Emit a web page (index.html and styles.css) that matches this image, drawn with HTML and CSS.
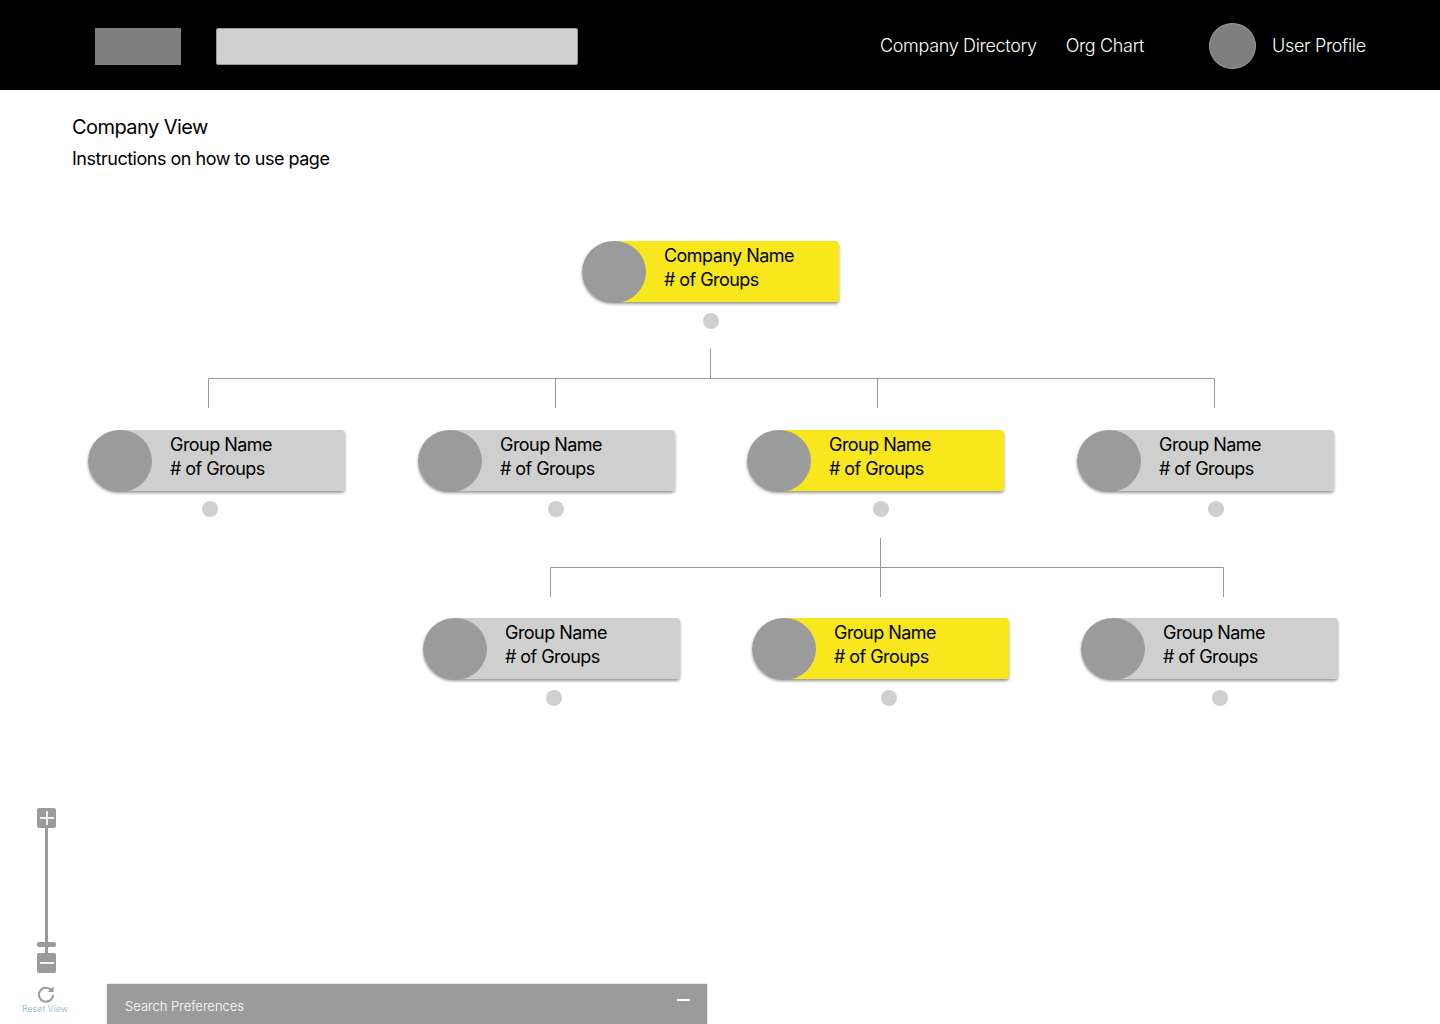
FILE: index.html
```html
<!DOCTYPE html>
<html lang="en">
<head>
<meta charset="UTF-8" />
<title>Company View</title>
<link rel="stylesheet" href="styles.css">
</head>
<body>

<header class="topbar">
  <div class="logo"></div>
  <div class="search"></div>
  <nav class="nav">
    <a class="nav-link">Company Directory</a>
    <a class="nav-link">Org Chart</a>
  </nav>
  <div class="profile">
    <div class="avatar"></div>
    <span class="nav-link">User Profile</span>
  </div>
</header>

<section class="intro">
  <h1 class="intro-title">Company View</h1>
  <p class="intro-text">Instructions on how to use page</p>
</section>

<!-- Org chart canvas -->
<main class="chart">
  <svg class="links" width="1440" height="520" viewBox="0 0 1440 520">
    <path d="M710.5 149V178.5M208.5 208V178.5H1214.5V208M555.5 178.5V208M877.5 178.5V208" />
    <path d="M880.5 338V397M550.5 397V367.5H1223.5V397" />
  </svg>

  <div class="node active n-company">
    <div class="node-pic"></div>
    <div class="node-text">Company Name<br># of Groups</div>
  </div>
  <span class="dot d-company"></span>

  <div class="node n-a">
    <div class="node-pic"></div>
    <div class="node-text">Group Name<br># of Groups</div>
  </div>
  <span class="dot d-a"></span>

  <div class="node n-b">
    <div class="node-pic"></div>
    <div class="node-text">Group Name<br># of Groups</div>
  </div>
  <span class="dot d-b"></span>

  <div class="node active n-c">
    <div class="node-pic"></div>
    <div class="node-text">Group Name<br># of Groups</div>
  </div>
  <span class="dot d-c"></span>

  <div class="node n-d">
    <div class="node-pic"></div>
    <div class="node-text">Group Name<br># of Groups</div>
  </div>
  <span class="dot d-d"></span>

  <div class="node n-e">
    <div class="node-pic"></div>
    <div class="node-text">Group Name<br># of Groups</div>
  </div>
  <span class="dot d-e"></span>

  <div class="node active n-f">
    <div class="node-pic"></div>
    <div class="node-text">Group Name<br># of Groups</div>
  </div>
  <span class="dot d-f"></span>

  <div class="node n-g">
    <div class="node-pic"></div>
    <div class="node-text">Group Name<br># of Groups</div>
  </div>
  <span class="dot d-g"></span>
</main>

<!-- Zoom control -->
<aside class="zoom">
  <button class="zoom-btn">
    <svg width="14" height="14" viewBox="0 0 14 14"><path d="M7 0V14M0 7H14" /></svg>
  </button>
  <div class="zoom-track"></div>
  <div class="zoom-handle"></div>
  <div class="zoom-track short"></div>
  <button class="zoom-btn">
    <svg width="14" height="14" viewBox="0 0 14 14"><path d="M0 7H14" /></svg>
  </button>
  <svg class="reset-icon" width="18" height="18" viewBox="0 0 18 18">
    <path d="M14.2 5A7 7 0 1 0 16 10" />
    <path class="reset-head" d="M16.6 1.2V7H10.8Z" />
  </svg>
  <span class="reset-label">Reset View</span>
</aside>

<div class="prefs">
  <span class="prefs-title">Search Preferences</span>
  <span class="prefs-toggle"></span>
</div>

</body>
</html>
```

FILE: styles.css
```css
* {
  box-sizing: border-box;
}
body {
  position: relative;
  margin: 0;
  height: 1024px;
  overflow: hidden;
  background: white;
  font-family: Inter, "Noto Sans", sans-serif;
  color: #000;
}

/* Barra do topo */
.topbar {
  display: flex;
  align-items: center;
  height: 90px;
  padding-left: 95px;
  background: #000;
}
.logo {
  width: 86px;
  height: 37px;
  margin-top: 2px;
  background: #7f7f7f;
}
.search {
  width: 362px;
  height: 37px;
  margin-top: 2px;
  margin-left: 35px;
  background: #cfcfcf;
  border: 1px solid #999;
  border-radius: 2px;
}
.nav {
  display: flex;
  gap: 29px;
  margin-left: 302px;
}
.nav-link {
  color: #fff;
  font-size: 18px;
  font-weight: 300;
  letter-spacing: -0.33px;
  white-space: nowrap;
}
.profile {
  display: flex;
  align-items: center;
  gap: 16px;
  margin-left: 65px;
}
.avatar {
  width: 47px;
  height: 46px;
  margin-top: 2px;
  background: #7f7f7f;
  border: 1px solid #999;
  border-radius: 50%;
}

/* Titulo */
.intro {
  height: 110px;
  padding: 25px 0 0 72px;
}
.intro-title {
  margin: 0;
  font-size: 20px;
  font-weight: 400;
  letter-spacing: -0.55px;
  line-height: 24px;
}
.intro-text {
  margin: 8px 0 0;
  font-size: 18px;
  font-weight: 400;
  letter-spacing: -0.48px;
  line-height: 24px;
}

/* Organograma */
.chart {
  position: relative;
  height: 520px;
}
.links {
  position: absolute;
  top: 0;
  left: 0;
}
.links path {
  fill: none;
  stroke: #999;
  stroke-width: 1;
}
.node {
  position: absolute;
  display: flex;
  align-items: center;
  width: 257px;
  height: 61px;
  background: linear-gradient(90deg, transparent 32px, #cfcfcf 32px);
  border-radius: 31px 4px 4px 31px;
  box-shadow: 0 2px 3px rgba(0, 0, 0, 0.4);
}
.node.active {
  background: linear-gradient(90deg, transparent 32px, #f8e71c 32px);
}
.node-pic {
  flex: none;
  width: 64px;
  height: 62px;
  margin-bottom: -1px;
  background: #9b9b9b;
  border-radius: 50%;
}
.node-text {
  padding-left: 18px;
  margin-top: -8px;
  font-size: 18px;
  font-weight: 400;
  letter-spacing: -0.55px;
  line-height: 24px;
}
.dot {
  position: absolute;
  width: 16px;
  height: 16px;
  background: #cfcfcf;
  border-radius: 50%;
}

.n-company { left: 582px; top: 41px; }
.n-a { left: 88px; top: 230px; }
.n-b { left: 418px; top: 230px; }
.n-c { left: 747px; top: 230px; }
.n-d { left: 1077px; top: 230px; }
.n-e { left: 423px; top: 418px; }
.n-f { left: 752px; top: 418px; }
.n-g { left: 1081px; top: 418px; }

.d-company { left: 703px; top: 113px; }
.d-a { left: 202px; top: 301px; }
.d-b { left: 548px; top: 301px; }
.d-c { left: 873px; top: 301px; }
.d-d { left: 1208px; top: 301px; }
.d-e { left: 546px; top: 490px; }
.d-f { left: 881px; top: 490px; }
.d-g { left: 1212px; top: 490px; }

/* Controle de zoom */
.zoom {
  position: absolute;
  left: 22px;
  top: 808px;
  display: flex;
  flex-direction: column;
  align-items: center;
  width: 49px;
}
.zoom-btn {
  display: flex;
  align-items: center;
  justify-content: center;
  width: 19px;
  height: 20px;
  padding: 0;
  background: #9b9b9b;
  border: none;
  border-radius: 2px;
}
.zoom-btn path {
  fill: none;
  stroke: #fff;
  stroke-width: 2;
  opacity: 0.85;
}
.zoom-track {
  width: 3px;
  height: 114px;
  background: #9b9b9b;
}
.zoom-track.short {
  height: 6px;
}
.zoom-handle {
  width: 19px;
  height: 5px;
  background: #9b9b9b;
  border-radius: 2px;
}
.reset-icon {
  margin-top: 12px;
  margin-right: 1px;
}
.reset-icon path {
  fill: none;
  stroke: #9b9b9b;
  stroke-width: 2;
}
.reset-icon .reset-head {
  fill: #9b9b9b;
  stroke: none;
}
.reset-label {
  margin-top: 0;
  margin-right: 3px;
  color: #7fb6cc;
  font-size: 9px;
  font-weight: 300;
  letter-spacing: -0.05px;
  line-height: 11px;
  white-space: nowrap;
}

/* Painel de preferencias */
.prefs {
  position: absolute;
  left: 107px;
  top: 984px;
  width: 600px;
  height: 40px;
  padding: 11px 18px 0;
  background: #9b9b9b;
  box-shadow: 0 0 2px rgba(0, 0, 0, 0.25);
}
.prefs-title {
  color: #fff;
  font-size: 13px;
  font-weight: 300;
  line-height: 17px;
}
.prefs-toggle {
  position: absolute;
  top: 15px;
  right: 17px;
  width: 13px;
  height: 2px;
  background: #fff;
}
```
